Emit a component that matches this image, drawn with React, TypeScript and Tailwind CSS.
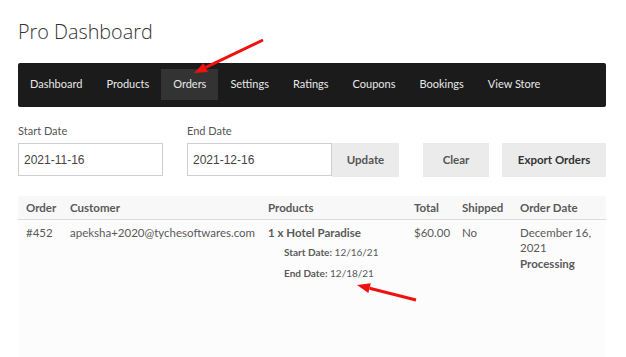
import React from 'react';

const navItems = ['Dashboard', 'Products', 'Orders', 'Settings', 'Ratings', 'Coupons', 'Bookings', 'View Store'];

function Arrow({ x1, y1, x2, y2 }: { x1: number; y1: number; x2: number; y2: number }) {
    // arrow line with a filled head at (x2, y2)
    const angle = Math.atan2(y2 - y1, x2 - x1);
    const len = 13;
    const half = 5;
    const bx = x2 - len * Math.cos(angle);
    const by = y2 - len * Math.sin(angle);
    const px = -Math.sin(angle) * half;
    const py = Math.cos(angle) * half;
    return (
        <g>
            <line x1={x1} y1={y1} x2={bx} y2={by} stroke="#f01010" strokeWidth={3} />
            <polygon points={`${x2},${y2} ${bx + px},${by + py} ${bx - px},${by - py}`} fill="#f01010" />
        </g>
    );
}

export default function App() {
    return (
        <div className="relative w-[626px] h-[357px] bg-white overflow-hidden" style={{ fontFamily: "'Lato', 'Liberation Sans', sans-serif" }}>
            <div className="pl-[18px] w-[606px]">
                {/* Title */}
                <h1
                    className="pt-[16px] text-[19.8px] leading-[32px] font-light text-[#333]"
                    style={{ fontFamily: "'Open Sans', sans-serif" }}
                >
                    Pro Dashboard
                </h1>

                {/* Nav */}
                <nav className="mt-[15px] h-[44px] bg-[#1b1b1b] rounded-[2px] flex items-start pt-[6px]">
                    {navItems.map((item) => (
                        <div
                            key={item}
                            className={`h-[31px] px-[12px] flex items-center text-[11px] whitespace-nowrap text-[#e8e8e8] ${item === 'Orders' ? 'bg-[#333333]' : ''}`}
                        >
                            {item}
                        </div>
                    ))}
                </nav>

                {/* Filters */}
                <div className="mt-[16px] flex items-end">
                    <div className="flex flex-col">
                        <label className="text-[11px] leading-[16px] text-[#555] mb-[4px]">Start Date</label>
                        <div className="w-[145px] h-[33px] border border-[#cfcfcf] flex items-center px-[5px] text-[12px] text-[#444]" style={{ fontFamily: "'Liberation Sans', sans-serif" }}>
                            2021-11-16
                        </div>
                    </div>
                    <div className="flex flex-col ml-[24px]">
                        <label className="text-[11px] leading-[16px] text-[#555] mb-[4px]">End Date</label>
                        <div className="w-[145px] h-[33px] border border-[#cfcfcf] flex items-center px-[5px] text-[12px] text-[#444]" style={{ fontFamily: "'Liberation Sans', sans-serif" }}>
                            2021-12-16
                        </div>
                    </div>
                    <button className="w-[67px] h-[34px] bg-[#ebebeb] text-[11.5px] font-bold text-[#555] mb-[-1px]">Update</button>
                    <button className="ml-[24px] w-[66px] h-[34px] bg-[#ebebeb] text-[11.5px] font-bold text-[#555] mb-[-1px]">Clear</button>
                    <button className="ml-[13px] w-[104px] h-[34px] bg-[#ebebeb] text-[11.5px] font-bold text-[#333] mb-[-1px]">Export Orders</button>
                </div>

                {/* Table */}
                <div className="mt-[20px] h-[200px] bg-[#fcfcfc]">
                    <table className="w-full table-fixed text-[11.5px] text-[#5a5a5a] border-collapse">
                        <thead>
                            <tr className="border-b border-[#dcdcdc] h-[23px] bg-[#f8f8f8]">
                                <th className="text-left font-bold pl-[8px] w-[52px]">Order</th>
                                <th className="text-left font-bold w-[198px]">Customer</th>
                                <th className="text-left font-bold w-[146px]">Products</th>
                                <th className="text-left font-bold w-[48px]">Total</th>
                                <th className="text-left font-bold w-[58px]">Shipped</th>
                                <th className="text-left font-bold">Order Date</th>
                            </tr>
                        </thead>
                        <tbody>
                            <tr className="align-top">
                                <td className="pl-[8px] pt-[5px] leading-[16px]">#452</td>
                                <td className="pt-[5px] leading-[16px]">apeksha+2020@tychesoftwares.com</td>
                                <td className="pt-[5px] leading-[16px]">
                                    <div className="font-bold">1 x Hotel Paradise</div>
                                    <div className="pl-[16px] text-[10px] mt-[3px] leading-[16px]"><b>Start Date:</b> 12/16/21</div>
                                    <div className="pl-[16px] text-[10px] mt-[5px] leading-[16px]"><b>End Date:</b> 12/18/21</div>
                                </td>
                                <td className="pt-[5px] leading-[16px]">$60.00</td>
                                <td className="pt-[5px] leading-[16px]">No</td>
                                <td className="pt-[5px] leading-[15.5px] pr-[8px]">
                                    <div>December 16,</div>
                                    <div>2021</div>
                                    <div className="font-bold">Processing</div>
                                </td>
                            </tr>
                        </tbody>
                    </table>
                </div>
            </div>

            {/* Annotation arrows */}
            <svg className="absolute inset-0 pointer-events-none" width="626" height="357">
                <Arrow x1={263} y1={40} x2={194} y2={73} />
                <Arrow x1={416} y1={300} x2={357} y2={285} />
            </svg>
        </div>
    );
}
